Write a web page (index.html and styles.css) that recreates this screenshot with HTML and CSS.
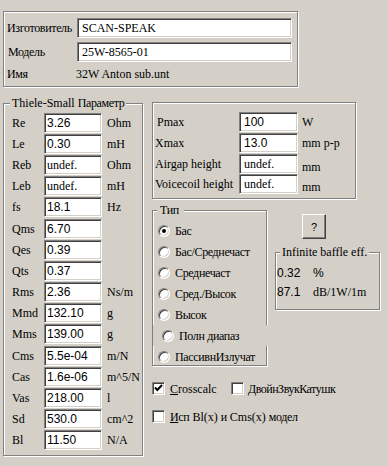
FILE: index.html
```html
<!DOCTYPE html>
<html>
<head>
<meta charset="utf-8">
<link rel="stylesheet" href="styles.css">
</head>
<body>
<div class="grp top">
  <div class="row"><span class="lbl cy">Изготовитель</span><div class="edit wide">SCAN-SPEAK</div></div>
  <div class="row"><span class="lbl ind cy">Модель</span><div class="edit wide">25W-8565-01</div></div>
  <div class="row name"><span class="lbl cy">Имя</span><span>32W Anton sub.unt</span></div>
</div>

<div class="main">
  <div class="grp ts">
    <span class="legend ts-leg">Thiele-Small <span class="cy">Параметр</span></span>
    <div class="row"><span class="lbl">Re</span><div class="edit sans">3.26</div><span class="unit">Ohm</span></div>
    <div class="row"><span class="lbl">Le</span><div class="edit sans">0.30</div><span class="unit">mH</span></div>
    <div class="row"><span class="lbl">Reb</span><div class="edit">undef.</div><span class="unit">Ohm</span></div>
    <div class="row"><span class="lbl">Leb</span><div class="edit">undef.</div><span class="unit">mH</span></div>
    <div class="row"><span class="lbl">fs</span><div class="edit sans">18.1</div><span class="unit">Hz</span></div>
    <div class="row"><span class="lbl">Qms</span><div class="edit sans">6.70</div></div>
    <div class="row"><span class="lbl">Qes</span><div class="edit sans">0.39</div></div>
    <div class="row"><span class="lbl">Qts</span><div class="edit sans">0.37</div></div>
    <div class="row"><span class="lbl">Rms</span><div class="edit sans">2.36</div><span class="unit">Ns/m</span></div>
    <div class="row"><span class="lbl">Mmd</span><div class="edit sans">132.10</div><span class="unit">g</span></div>
    <div class="row"><span class="lbl">Mms</span><div class="edit sans">139.00</div><span class="unit">g</span></div>
    <div class="row"><span class="lbl">Cms</span><div class="edit sans">5.5e-04</div><span class="unit">m/N</span></div>
    <div class="row"><span class="lbl">Cas</span><div class="edit sans">1.6e-06</div><span class="unit">m^5/N</span></div>
    <div class="row"><span class="lbl">Vas</span><div class="edit sans">218.00</div><span class="unit">l</span></div>
    <div class="row"><span class="lbl">Sd</span><div class="edit sans">530.0</div><span class="unit">cm^2</span></div>
    <div class="row"><span class="lbl">Bl</span><div class="edit sans">11.50</div><span class="unit">N/A</span></div>
  </div>

  <div class="right">
    <div class="grp pmax">
      <div class="row"><span class="lbl ind2">Pmax</span><div class="edit sans">100</div><span class="unit">W</span></div>
      <div class="row"><span class="lbl">Xmax</span><div class="edit sans">13.0</div><span class="unit">mm p-p</span></div>
      <div class="row"><span class="lbl">Airgap height</span><div class="edit">undef.</div><span class="unit low">mm</span></div>
      <div class="row"><span class="lbl">Voicecoil height</span><div class="edit">undef.</div><span class="unit low">mm</span></div>
    </div>

    <div class="mid">
      <div class="grp type">
        <span class="legend type-leg cy">Тип</span>
        <div class="opt cy"><span class="radio on"></span><span>Бас</span></div>
        <div class="opt cy"><span class="radio"></span><span>Бас/Среднечаст</span></div>
        <div class="opt cy"><span class="radio"></span><span>Среднечаст</span></div>
        <div class="opt cy"><span class="radio"></span><span>Сред./Высок</span></div>
        <div class="opt cy"><span class="radio"></span><span>Высок</span></div>
        <div class="opt full cy"><span class="radio"></span><span>Полн диапаз</span></div>
        <div class="opt cy"><span class="radio"></span><span>ПассивнИзлучат</span></div>
      </div>
      <div class="side">
        <div class="btn sans">?</div>
        <div class="grp inf">
          <span class="legend inf-leg">Infinite baffle eff.</span>
          <div class="irow"><span class="ival sans">0.32</span><span class="sans">%</span></div>
          <div class="irow"><span class="ival sans">87.1</span><span>dB/1W/1m</span></div>
        </div>
      </div>
    </div>

    <div class="checks">
      <div class="chk first"><span class="cb"><svg width="11" height="11" viewBox="0 0 11 11"><path d="M2 4.5 L4.3 7 L9 2" fill="none" stroke="#000" stroke-width="2"/></svg></span><span><u>C</u>rosscalc</span></div>
      <div class="chk second"><span class="cb"></span><span class="cy2"><u>Д</u>войнЗвукКатушк</span></div>
    </div>
    <div class="checks row2">
      <div class="chk first"><span class="cb"></span><span><u class="cy">И</u><span class="cy">сп</span> Bl(x) <span class="cy">и</span> Cms(x) <span class="cy">модел</span></span></div>
    </div>
  </div>
</div>
</body>
</html>
```

FILE: styles.css
```css
* { box-sizing: border-box; }
html, body { margin: 0; padding: 0; }
body {
  width: 388px;
  height: 466px;
  overflow: hidden;
  background: #d4d0c8;
  color: #000;
  font: 12px/14px "Liberation Serif", "Times New Roman", serif;
}
.sans { font-family: "Liberation Sans", Arial, sans-serif; }
.cy { letter-spacing: -0.35px; }
.cy2 { letter-spacing: -0.5px; }

.grp {
  position: relative;
  border: 1px solid #808080;
  box-shadow: inset 1px 1px 0 #fff, 1px 1px 0 #fff;
}
.legend {
  position: absolute;
  top: -7px;
  line-height: 13px;
  background: #d4d0c8;
  white-space: nowrap;
}

.edit {
  display: flex;
  align-items: center;
  height: 20px;
  background: #fff;
  border: 1px solid;
  border-color: #808080 #fff #fff #808080;
  box-shadow: inset 1px 1px 0 #404040, inset -1px -1px 0 #d4d0c8;
  white-space: nowrap;
  flex: none;
}
.row { display: flex; align-items: center; white-space: nowrap; }
.lbl { flex: none; }

/* top group */
.top {
  margin: 11px 0 0 3px;
  width: 295px;
  height: 76px;
  padding: 6px 0 0 3px;
}
.top .row + .row { margin-top: 4px; }
.top .lbl { width: 70px; }
.top .lbl.ind { padding-left: 1px; }
.top .edit { width: 215px; padding-left: 4px; }
.top .name { height: 16px; margin-top: 6px; }
.top .name .lbl { width: 69px; }

.main {
  display: flex;
  align-items: flex-start;
  margin-top: 16px;
}

/* Thiele-Small */
.ts {
  margin-left: 3px;
  width: 140px;
  height: 353px;
  padding: 8px 0 0 8px;
  flex: none;
}
.ts-leg { left: 6px; padding: 0 1px 0 2px; }
.ts .row { height: 21.2px; }
.ts .lbl { width: 32px; }
.ts .edit { width: 58px; padding-left: 2px; }
.ts .unit { margin-left: 5px; }

/* right column */
.right { margin-left: 9px; margin-top: -1px; }
.pmax {
  width: 204px;
  height: 97px;
  padding: 9px 0 0 2px;
}
.pmax .row { height: 20.67px; }
.pmax .lbl { width: 84px; }
.pmax .lbl.ind2 { padding-left: 2px; }
.pmax .edit { width: 59px; padding-left: 4px; }
.pmax .unit { margin-left: 4px; }
.pmax .unit.low { margin-top: 6px; }

.mid { display: flex; align-items: flex-start; margin-top: 11px; }
.type {
  width: 115px;
  height: 156px;
  padding-top: 9px;
  flex: none;
}
.type-leg { left: 4px; padding: 0 5px 0 3px; }
.opt {
  display: flex;
  align-items: center;
  height: 21px;
  padding-left: 5px;
  white-space: nowrap;
}
.opt.full {
  padding-left: 9px;
  margin-right: -3px;
  background: #d4d0c8;
  position: relative;
}
.radio {
  position: relative;
  flex: none;
  width: 12px;
  height: 12px;
  margin-right: 5px;
  border-radius: 50%;
  background: #fff;
  border: 1px solid;
  border-color: #808080 #fff #fff #808080;
  box-shadow: inset 1px 1px 0 #404040, inset -1px -1px 0 #d4d0c8;
}
.radio.on::after {
  content: "";
  position: absolute;
  left: 3px;
  top: 3px;
  width: 4px;
  height: 4px;
  border-radius: 50%;
  background: #000;
}

.side { margin-left: 8px; }
.btn {
  display: flex;
  align-items: center;
  justify-content: center;
  width: 24px;
  height: 25px;
  margin: 4px 0 0 27px;
  border: 1px solid;
  border-color: #fff #404040 #404040 #fff;
  box-shadow: inset -1px -1px 0 #808080;
  font-size: 11px;
}
.inf {
  width: 105px;
  height: 58px;
  margin-top: 13px;
  padding: 10px 0 0 1px;
}
.inf-leg { left: 4px; padding: 0 2px; }
.irow { display: flex; align-items: center; height: 19px; white-space: nowrap; }
.ival { width: 36px; }

/* checkboxes */
.checks { display: flex; align-items: center; margin-top: 16px; white-space: nowrap; }
.checks.row2 { margin-top: 15px; }
.chk { display: flex; align-items: center; height: 13px; }
.chk.first { width: 79px; }
.chk .cb { margin-right: 5px; }
.chk.second .cb { margin-right: 4px; }
.cb {
  display: flex;
  align-items: center;
  justify-content: center;
  flex: none;
  width: 13px;
  height: 13px;
  background: #fff;
  border: 1px solid;
  border-color: #808080 #fff #fff #808080;
  box-shadow: inset 1px 1px 0 #404040, inset -1px -1px 0 #d4d0c8;
}
.cb svg { display: block; }
```
